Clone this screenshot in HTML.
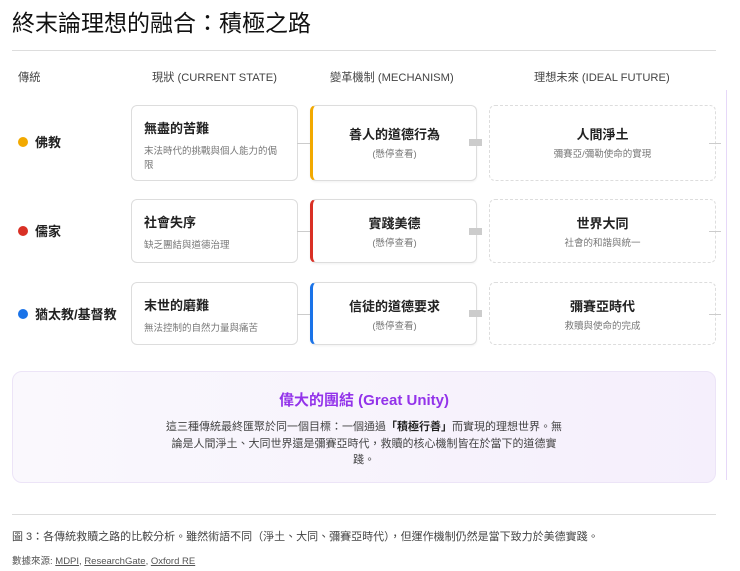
<!DOCTYPE html>
<html><head><meta charset="utf-8"><style>
*{margin:0;padding:0;box-sizing:border-box}
body{width:740px;height:571px;background:#fff;position:relative;font-family:"Liberation Sans","Noto Sans CJK TC",sans-serif;color:#222;overflow:hidden}
.a{position:absolute}
h1{position:absolute;left:12px;top:8px;font-size:23px;font-weight:400;color:#111;line-height:30px}
.hr{position:absolute;height:1px;background:#ddd}
.hd{position:absolute;top:71px;font-size:11.2px;color:#444;line-height:15px}
.lab{position:absolute;left:18px;font-size:13px;font-weight:700;color:#222;display:flex;align-items:center}
.dot{width:10px;height:10px;border-radius:50%;margin-right:7px;display:inline-block}
.box{position:absolute;border:1px solid #ddd;border-radius:6px;background:#fff}
.cur{left:131px;width:167px;padding:14px 12px}
.cur b{display:block;font-size:13px;font-weight:700;color:#222;line-height:17px}
.cur span{display:block;font-size:9.5px;color:#777;margin-top:8px;line-height:14px}
.mech{left:310px;width:167px;text-align:center;border-left-width:3px;box-shadow:0 1px 2px rgba(0,0,0,.06)}
.fut{left:489px;width:227px;text-align:center;border:1px dashed #ddd}
.t{font-size:13px;font-weight:700;color:#222;line-height:17px}
.s{font-size:9.5px;color:#777;margin-top:6px;line-height:12px}
.ln{position:absolute;height:1px;background:#ccc}
.sq{position:absolute;width:13px;height:7px;background:#ccc}
</style></head><body>
<h1>終末論理想的融合：積極之路</h1>
<div class="hr" style="left:12px;width:704px;top:50px"></div>
<div class="hd" style="left:18px">傳統</div>
<div class="hd" style="left:152px">現狀 (CURRENT STATE)</div>
<div class="hd" style="left:330px">變革機制 (MECHANISM)</div>
<div class="hd" style="left:534px">理想未來 (IDEAL FUTURE)</div>
<div class="a" style="left:726px;top:90px;width:1px;height:390px;background:#e6d8f8"></div>

<div class="lab" style="top:132px"><i class="dot" style="background:#f2a900"></i>佛教</div>
<div class="box cur" style="top:105px;height:76px"><b>無盡的苦難</b><span>末法時代的挑戰與個人能力的侷限</span></div>
<div class="ln" style="left:297px;width:14px;top:143px"></div>
<div class="box mech" style="top:105px;height:76px;border-left-color:#f2a900;padding-top:20px"><div class="t">善人的道德行為</div><div class="s">(懸停查看)</div></div>
<div class="sq" style="left:469px;top:139px"></div>
<div class="box fut" style="top:105px;height:76px;padding-top:20px"><div class="t">人間淨土</div><div class="s">彌賽亞/彌勒使命的實現</div></div>
<div class="ln" style="left:709px;width:12px;top:143px"></div>

<div class="lab" style="top:221px"><i class="dot" style="background:#d93025"></i>儒家</div>
<div class="box cur" style="top:199px;height:64px;padding-top:14px"><b>社會失序</b><span>缺乏團結與道德治理</span></div>
<div class="ln" style="left:297px;width:14px;top:231px"></div>
<div class="box mech" style="top:199px;height:64px;border-left-color:#d93025;padding-top:15px"><div class="t">實踐美德</div><div class="s">(懸停查看)</div></div>
<div class="sq" style="left:469px;top:228px"></div>
<div class="box fut" style="top:199px;height:64px;padding-top:15px"><div class="t">世界大同</div><div class="s">社會的和諧與統一</div></div>
<div class="ln" style="left:709px;width:12px;top:231px"></div>

<div class="lab" style="top:304px"><i class="dot" style="background:#1a73e8"></i>猶太教/基督教</div>
<div class="box cur" style="top:282px;height:63px;padding-top:14px"><b>末世的磨難</b><span>無法控制的自然力量與痛苦</span></div>
<div class="ln" style="left:297px;width:14px;top:314px"></div>
<div class="box mech" style="top:282px;height:63px;border-left-color:#1a73e8;padding-top:15px"><div class="t">信徒的道德要求</div><div class="s">(懸停查看)</div></div>
<div class="sq" style="left:469px;top:310px"></div>
<div class="box fut" style="top:282px;height:63px;padding-top:15px"><div class="t">彌賽亞時代</div><div class="s">救贖與使命的完成</div></div>
<div class="ln" style="left:709px;width:12px;top:314px"></div>

<div class="a" style="left:12px;top:371px;width:704px;height:112px;border:1px solid #ece4f7;border-radius:10px;background:linear-gradient(90deg,#faf8fd,#f5effc);text-align:center">
<div style="margin-top:19px;font-size:15px;font-weight:700;color:#9333ea;line-height:20px">偉大的團結 (Great Unity)</div>
<div style="width:404px;margin:8px auto 0;font-size:11px;color:#444;line-height:16.5px">這三種傳統最終匯聚於同一個目標：一個通過<b style="color:#222">「積極行善」</b>而實現的理想世界。無論是人間淨土、大同世界還是彌賽亞時代，救贖的核心機制皆在於當下的道德實踐。</div>
</div>

<div class="hr" style="left:12px;width:704px;top:514px"></div>
<div class="a" style="left:12px;top:530px;font-size:11px;color:#444;line-height:14px">圖 3：各傳統救贖之路的比較分析。雖然術語不同（淨土、大同、彌賽亞時代），但運作機制仍然是當下致力於美德實踐。</div>
<div class="a" style="left:12px;top:555px;font-size:9.5px;color:#555;line-height:13px">數據來源: <u>MDPI</u>, <u>ResearchGate</u>, <u>Oxford RE</u></div>
</body></html>
